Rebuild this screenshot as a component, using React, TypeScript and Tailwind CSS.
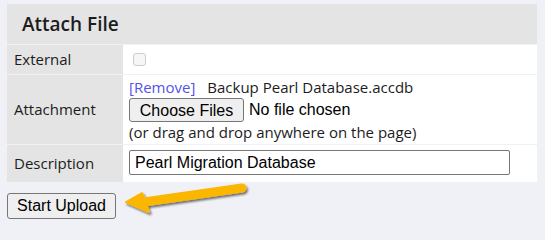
import React from "react";

const ui = { fontFamily: '"Open Sans", "Noto Sans", sans-serif' };
const native = { fontFamily: '"Liberation Sans", Arial, sans-serif' };

function Arrow() {
  return (
    <svg
      className="absolute left-[120px] top-[180px]"
      width="132"
      height="40"
      viewBox="0 0 132 40"
    >
      <defs>
        <filter id="sh" x="-20%" y="-40%" width="140%" height="180%">
          <feDropShadow dx="1.5" dy="2" stdDeviation="1.3" floodColor="#000" floodOpacity="0.55" />
        </filter>
      </defs>
      <g filter="url(#sh)" fill="#fbb604" stroke="#fbb604">
        <line x1="24" y1="22" x2="122" y2="8" strokeWidth="9" strokeLinecap="round" />
        <polygon points="6,22 22,13 29,32" strokeWidth="2" strokeLinejoin="round" />
      </g>
    </svg>
  );
}

export default function App() {
  return (
    <div className="relative min-h-screen bg-[#f0f1f6] px-[7px] pt-1 text-[15px] text-[#1c1c1c]" style={ui}>
      <div className="flex w-[530px] flex-col gap-px">
        <div className="flex h-10 items-center bg-[#e4e4e4] pl-[15px] text-[19px] font-semibold">
          Attach File
        </div>

        <div className="grid h-[29px] grid-cols-[116px_1fr]">
          <div className="flex items-center bg-[#e4e4e4] pl-[7px]">External</div>
          <div className="flex items-center bg-white pl-[10px]">
            <span className="h-[13px] w-[13px] rounded-[3px] border border-[#cdcdcd] bg-[#f6f6f6]" />
          </div>
        </div>

        <div className="grid h-[69px] grid-cols-[116px_1fr]">
          <div className="flex items-center bg-[#e4e4e4] pl-[7px]">Attachment</div>
          <div className="flex flex-col bg-white pl-[6px] pt-[2px]">
            <div className="flex h-5 items-center">
              <span className="text-[#5353ea]">[Remove]</span>
              <span className="ml-[12px]">Backup Pearl Database.accdb</span>
            </div>
            <div className="mt-px flex h-6 items-center" style={native}>
              <button
                className="h-6 w-[115px] rounded-[3px] border border-[#767676] bg-[#efefef] text-[16px] text-black"
                style={native}
              >
                Choose Files
              </button>
              <span className="ml-[5px] text-[16px] text-black">No file chosen</span>
            </div>
            <div className="flex h-5 items-center">(or drag and drop anywhere on the page)</div>
          </div>
        </div>

        <div className="grid h-[37px] grid-cols-[116px_1fr]">
          <div className="flex items-center bg-[#e4e4e4] pl-[7px]">Description</div>
          <div className="bg-white pl-[6px] pt-[5px]">
            <div
              className="flex h-[25px] w-[381px] items-center rounded-[2px] border border-[#767676] pl-[5px] text-[16px] text-black"
              style={native}
            >
              Pearl Migration Database
            </div>
          </div>
        </div>
      </div>

      <button
        className="mt-[11px] h-[26px] w-[109px] rounded-[3px] border border-[#767676] bg-[#efefef] text-[16px] text-black"
        style={native}
      >
        Start Upload
      </button>

      <Arrow />
    </div>
  );
}
